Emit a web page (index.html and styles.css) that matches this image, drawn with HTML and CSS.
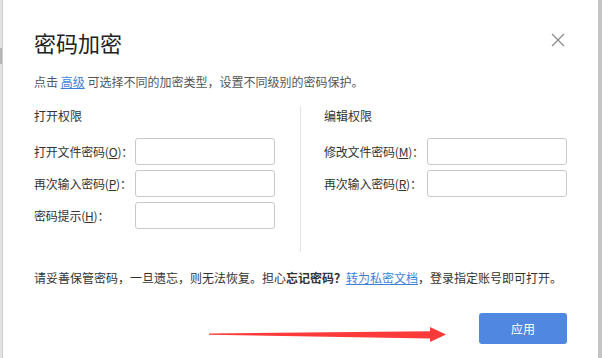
FILE: index.html
```html
<!doctype html>
<html lang="zh-CN">
<head>
<meta charset="utf-8">
<title>密码加密</title>
<meta name="viewport" content="width=device-width, initial-scale=1">
<link rel="stylesheet" href="styles.css">
</head>
<body>
<div class="gutter"><div class="thumb"></div></div>
<div class="dialog">
<div class="head">
<h1>密码加密</h1>
<svg class="close" width="14" height="14" viewBox="0 0 14 14"><path d="M1 1L13 13M13 1L1 13" stroke="#8a8a8a" stroke-width="1.2" fill="none"/></svg>
</div>
<p class="hint">点击 <a href="#">高级</a> 可选择不同的加密类型，设置不同级别的密码保护。</p>
<div class="cols">
<div class="col left">
<h2>打开权限</h2>
<label class="row"><span>打开文件密码(<u>O</u>)：</span><input type="password"></label>
<label class="row"><span>再次输入密码(<u>P</u>)：</span><input type="password"></label>
<label class="row"><span>密码提示(<u>H</u>)：</span><input type="text"></label>
</div>
<div class="col right">
<h2>编辑权限</h2>
<label class="row"><span>修改文件密码(<u>M</u>)：</span><input type="password"></label>
<label class="row"><span>再次输入密码(<u>R</u>)：</span><input type="password"></label>
</div>
</div>
<p class="note">请妥善保管密码，一旦遗忘，则无法恢复。担心<b>忘记密码？</b><a href="#">转为私密文档</a>，登录指定账号即可打开。</p>
<div class="foot"><button>应用</button></div>
<svg class="arrow" width="602" height="358" viewBox="0 0 602 358"><polygon points="209,333.6 430,331.2 430,327 446,334.6 430,342 430,338.4 209,334.8" fill="#fd3a3a"/></svg>
</div>
</body>
</html>
```
FILE: styles.css
```css
* { box-sizing:border-box; margin:0; padding:0; font-family:'Noto Sans CJK SC', 'Microsoft YaHei', sans-serif; }
body { display:flex; height:358px; overflow:hidden; background:#c4c4c4; }
.gutter { width:3px; flex:none; background:#e2e2e2; border-right:1px solid #cfcfcf; }
.thumb { height:16px; margin-top:48px; background:#b5b5b5; }
.dialog { position:relative; width:595px; flex:none; background:#fff; padding:0 31px; color:#333; font-size:12px; }
.head { display:flex; justify-content:space-between; padding-top:27px; }
h1 { font-size:22px; line-height:30px; font-weight:normal; color:#222; }
.close { margin:6px 2px 0 0; }
.hint { margin-top:15px; line-height:20px; color:#555; }
a { color:#3f7fd9; text-decoration:underline; }
.cols { display:flex; margin-top:14px; height:146px; }
.col { display:flex; flex-direction:column; row-gap:5px; }
.left { width:266px; }
.right { flex:1; border-left:1px solid #e3e3e3; padding-left:23px; }
h2 { font-size:12px; font-weight:normal; line-height:20px; margin-bottom:7px; }
.row { display:flex; align-items:center; }
.row span { flex:none; white-space:nowrap; letter-spacing:-0.2px; }
.left .row span { width:101px; }
.right .row span { width:103px; }
u { text-decoration:underline; }
input { flex:none; width:140px; height:27px; border:1px solid #c9c9c9; border-radius:3px; background:#fff; }
.note { margin-top:16px; line-height:20px; }
b { font-weight:bold; }
.foot { display:flex; justify-content:flex-end; margin-top:25px; }
button { width:88px; height:31px; border:0; border-radius:3px; background:#5088e1; color:#fff; font-size:12px; }
.arrow { position:absolute; left:-3px; top:0; pointer-events:none; }
```
